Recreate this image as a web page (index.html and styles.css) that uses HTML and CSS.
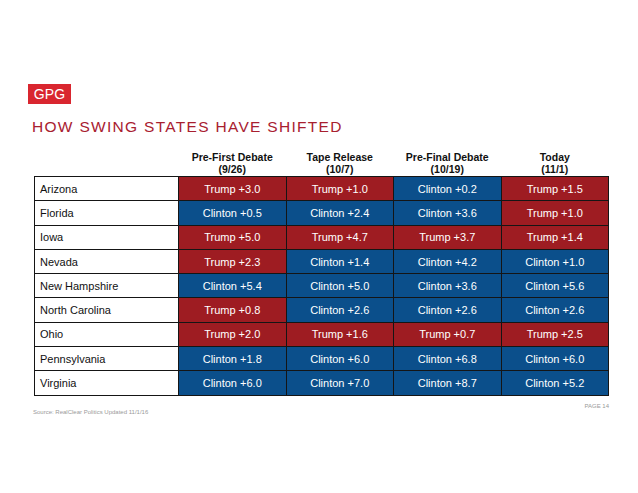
FILE: index.html
```html
<!DOCTYPE html>
<html>
<head>
<meta charset="utf-8">
<link rel="stylesheet" href="styles.css">
</head>
<body>
<div class="slide">
  <div class="logo">GPG</div>
  <h1 class="title">HOW SWING STATES HAVE SHIFTED</h1>
  <table class="grid">
    <thead>
      <tr>
        <th class="blank"></th>
        <th>Pre-First Debate<br>(9/26)</th>
        <th>Tape Release<br>(10/7)</th>
        <th>Pre-Final Debate<br>(10/19)</th>
        <th>Today<br>(11/1)</th>
      </tr>
    </thead>
    <tbody>
      <tr><td class="state">Arizona</td><td class="r">Trump +3.0</td><td class="r">Trump +1.0</td><td class="b">Clinton +0.2</td><td class="r">Trump +1.5</td></tr>
      <tr><td class="state">Florida</td><td class="b">Clinton +0.5</td><td class="b">Clinton +2.4</td><td class="b">Clinton +3.6</td><td class="r">Trump +1.0</td></tr>
      <tr><td class="state">Iowa</td><td class="r">Trump +5.0</td><td class="r">Trump +4.7</td><td class="r">Trump +3.7</td><td class="r">Trump +1.4</td></tr>
      <tr><td class="state">Nevada</td><td class="r">Trump +2.3</td><td class="b">Clinton +1.4</td><td class="b">Clinton +4.2</td><td class="b">Clinton +1.0</td></tr>
      <tr><td class="state">New Hampshire</td><td class="b">Clinton +5.4</td><td class="b">Clinton +5.0</td><td class="b">Clinton +3.6</td><td class="b">Clinton +5.6</td></tr>
      <tr><td class="state">North Carolina</td><td class="r">Trump +0.8</td><td class="b">Clinton +2.6</td><td class="b">Clinton +2.6</td><td class="b">Clinton +2.6</td></tr>
      <tr><td class="state">Ohio</td><td class="r">Trump +2.0</td><td class="r">Trump +1.6</td><td class="r">Trump +0.7</td><td class="r">Trump +2.5</td></tr>
      <tr><td class="state">Pennsylvania</td><td class="b">Clinton +1.8</td><td class="b">Clinton +6.0</td><td class="b">Clinton +6.8</td><td class="b">Clinton +6.0</td></tr>
      <tr><td class="state">Virginia</td><td class="b">Clinton +6.0</td><td class="b">Clinton +7.0</td><td class="b">Clinton +8.7</td><td class="b">Clinton +5.2</td></tr>
    </tbody>
  </table>
  <div class="footer">
    <span class="source">Source: RealClear Politics Updated 11/1/16</span>
    <span class="page">PAGE 14</span>
  </div>
</div>
</body>
</html>
```

FILE: styles.css
```css
html, body {
  margin: 0;
  padding: 0;
  background: #ffffff;
}
body {
  font-family: "Liberation Sans", Arial, sans-serif;
  width: 638px;
  height: 493px;
  overflow: hidden;
}
.slide {
  padding: 84px 30px 0 28px;
}
.logo {
  width: 43px;
  height: 20px;
  background: #d9262f;
  color: #ffffff;
  font-size: 14px;
  line-height: 20px;
  text-align: center;
  letter-spacing: 0.2px;
}
.title {
  margin: 14px 0 0 4px;
  font-size: 15.5px;
  font-weight: normal;
  line-height: 18px;
  color: #a8202f;
  letter-spacing: 1.3px;
}
.grid {
  margin: 15px 0 0 6px;
  border-collapse: collapse;
  table-layout: fixed;
  width: 575px;
  font-size: 11px;
}
.grid th {
  font-weight: bold;
  font-size: 10.5px;
  line-height: 12px;
  color: #111111;
  padding: 0 0 1px 0;
  text-align: center;
  width: 107.5px;
}
.grid th.blank {
  width: 144px;
}
.grid td {
  height: 23.3px;
  padding: 0;
  border: 1px solid #151515;
  text-align: center;
  color: #ffffff;
}
.grid td.state {
  text-align: left;
  padding-left: 5px;
  color: #111111;
  background: #ffffff;
}
.grid td.r {
  background: #9e1c22;
}
.grid td.b {
  background: #0b4f8b;
}
.footer {
  display: flex;
  justify-content: space-between;
  align-items: flex-start;
  margin: 0 0 0 5px;
  width: 576px;
  color: #9a9a9a;
  font-size: 6px;
}
.source {
  margin-top: 13px;
}
.page {
  margin-top: 7px;
}
```
